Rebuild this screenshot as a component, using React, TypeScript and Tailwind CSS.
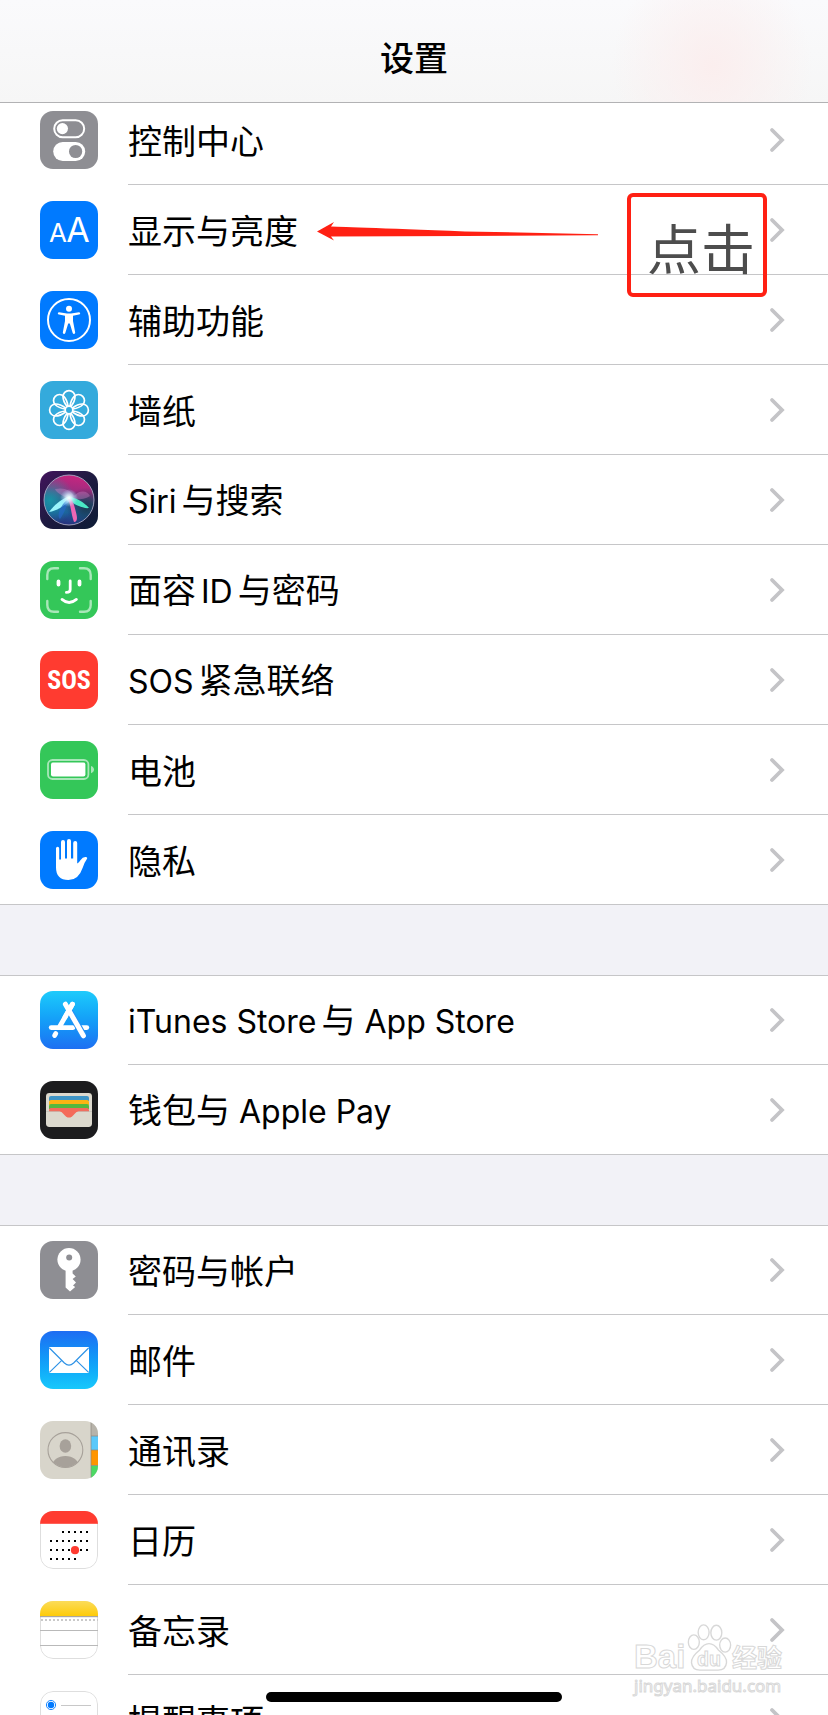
import type { ReactNode } from "react";

const TILE = "size-[58px] shrink-0 rounded-[13px]";

function Tile({ className, children }: { className: string; children: ReactNode }) {
  return (
    <svg viewBox="0 0 58 58" aria-hidden="true" className={`${TILE} ${className}`}>
      {children}
    </svg>
  );
}

function ControlCenterIcon() {
  return (
    <Tile className="bg-[#8e8e93]">
      <rect x="14.2" y="9.2" width="30" height="17" rx="8.5" fill="none" stroke="#fff" strokeWidth="2" />
      <circle cx="22.4" cy="17.6" r="5.6" fill="#fff" />
      <rect x="13.2" y="31" width="32" height="19" rx="9.5" fill="#fff" />
      <circle cx="35.6" cy="40.5" r="6.6" fill="#8e8e93" />
    </Tile>
  );
}

function DisplayIcon() {
  return (
    <Tile className="bg-[#007aff]">
      <g fill="#fff" textAnchor="middle" className="font-['Inter',sans-serif] font-normal">
        <text x="18" y="41" fontSize="26">A</text>
        <text x="38" y="41" fontSize="34">A</text>
      </g>
    </Tile>
  );
}

function AccessibilityIcon() {
  return (
    <Tile className="bg-[#007aff]">
      <circle cx="29" cy="29" r="21" fill="none" stroke="#fff" strokeWidth="2" />
      <circle cx="29" cy="17.8" r="3" fill="#fff" />
      <path
        d="M19 21.2 L27 22.4 H31 L39 21.2 Q40.4 21.4 40.2 22.6 Q40 23.4 39 23.6 L33 24.8 V30 L35.2 41.6 Q35.2 43 34 43 Q33 43 32.7 42 L29.8 32.6 H28.2 L25.3 42 Q25 43 24 43 Q22.8 43 22.8 41.6 L25 30 V24.8 L19 23.6 Q18 23.4 17.8 22.6 Q17.6 21.4 19 21.2Z"
        fill="#fff"
      />
    </Tile>
  );
}

const PETALS = [0, 45, 90, 135, 180, 225, 270, 315];

function WallpaperIcon() {
  return (
    <Tile className="bg-[#34aadc]">
      <g fill="none" stroke="#fff" strokeWidth="1.7">
        {PETALS.map((angle) => (
          <path
            key={angle}
            d="M27 25.6 C24.6 22.4 23 18.8 23 15.6 A6 6 0 0 1 35 15.6 C35 18.8 33.4 22.4 31 25.6"
            transform={`rotate(${angle} 29 29)`}
          />
        ))}
        <circle cx="29" cy="29" r="3.8" />
      </g>
    </Tile>
  );
}

function SiriIcon() {
  return (
    <Tile className="bg-linear-to-br from-[#42125c] via-[#1d1a40] to-[#0d1c36]">
      <defs>
        <linearGradient id="siriOrb" x1="0.6" y1="0" x2="0.45" y2="1">
          <stop offset="0" stopColor="#c9257f" />
          <stop offset="0.3" stopColor="#a02c80" />
          <stop offset="0.52" stopColor="#3a4f86" />
          <stop offset="0.75" stopColor="#1d5a9a" />
          <stop offset="1" stopColor="#28307c" />
        </linearGradient>
        <radialGradient id="siriTeal" cx="0.12" cy="0.5" r="0.5">
          <stop offset="0" stopColor="#1599a8" stopOpacity="0.9" />
          <stop offset="1" stopColor="#1599a8" stopOpacity="0" />
        </radialGradient>
        <radialGradient id="siriShade" cx="0.85" cy="0.65" r="0.4">
          <stop offset="0" stopColor="#17384a" stopOpacity="0.9" />
          <stop offset="1" stopColor="#17384a" stopOpacity="0" />
        </radialGradient>
        <radialGradient id="siriCore">
          <stop offset="0" stopColor="#fff" />
          <stop offset="0.35" stopColor="#dff6ff" stopOpacity="0.8" />
          <stop offset="1" stopColor="#9fdcff" stopOpacity="0" />
        </radialGradient>
      </defs>
      <circle cx="29" cy="29" r="25" fill="url(#siriOrb)" />
      <circle cx="29" cy="29" r="25" fill="url(#siriTeal)" />
      <circle cx="29" cy="29" r="25" fill="url(#siriShade)" />
      <circle cx="29" cy="29" r="25" fill="none" stroke="#a8a9c4" strokeWidth="1" strokeOpacity="0.9" />
      <path d="M29 28 C22 25 16 21 15 18 C24 16 31 19 34 25 C40 18 48 20 50 25 C44 29 36 29 29 28Z" fill="#e08ad0" fillOpacity="0.35" />
      <path d="M30 25 C23 27 15 33 9 41 C17 40 25 34 31 29Z" fill="#9af4fb" />
      <path d="M28 25 C36 27 44 31 49 37 C43 38 34 33 28 29Z" fill="#4ae8c4" />
      <path d="M28 28 C31 34 31 43 34 51 C37.4 51 37.4 47 36.4 43 C34.6 36 34 32 31 28Z" fill="#ee67b5" />
      <path d="M27 29 C21 34 16 44 20 48 C24 43 26 36 29 30Z" fill="#2667c9" fillOpacity="0.65" />
      <circle cx="29" cy="27" r="9" fill="url(#siriCore)" />
    </Tile>
  );
}

function FaceIdIcon() {
  return (
    <Tile className="bg-[#34c759]">
      <g fill="none" strokeLinecap="round" stroke="#a9e7b9" strokeWidth="2.4">
        <path d="M7.3 18 V14 Q7.3 7.3 14 7.3 H18" />
        <path d="M40 7.3 H44 Q50.7 7.3 50.7 14 V18" />
        <path d="M7.3 40 V44 Q7.3 50.7 14 50.7 H18" />
        <path d="M40 50.7 H44 Q50.7 50.7 50.7 44 V40" />
      </g>
      <g fill="none" strokeLinecap="round" stroke="#fff">
        <path d="M18.5 20.5 V23.6 M39.5 20.5 V23.6" strokeWidth="3.8" />
        <path d="M30.2 20 V28.5 Q30.2 31.4 26.4 31.4" strokeWidth="2.8" />
        <path d="M22 38.4 Q29 44.6 36.4 38.4" strokeWidth="2.8" />
      </g>
    </Tile>
  );
}

function SosIcon() {
  return (
    <Tile className="bg-[#ff3b30]">
      <text
        x="29"
        y="38"
        textAnchor="middle"
        fontSize="26"
        fill="#fff"
        className="font-['Roboto_Condensed','Liberation_Sans_Narrow','Noto_Sans',sans-serif] font-bold"
      >
        SOS
      </text>
    </Tile>
  );
}

function BatteryIcon() {
  return (
    <Tile className="bg-[#34c759]">
      <rect x="8" y="19" width="40.4" height="19" rx="4.5" fill="none" stroke="#a9e7b9" strokeWidth="1.8" />
      <rect x="11" y="21.6" width="34.4" height="13.8" rx="2" fill="#fff" />
      <path d="M51 25 Q54 26 54 28.6 Q54 31.2 51 32.2Z" fill="#a9e7b9" />
    </Tile>
  );
}

function PrivacyIcon() {
  return (
    <Tile className="bg-[#007aff]">
      <path
        d="M16 17.4 Q16 15.8 17.6 15.8 Q19.2 15.8 19.2 17.4 V28.4 H21 V11 Q21 9 23 9 Q25 9 25 11 V27.4 H27 V10 Q27 8 29 8 Q31 8 31 10 V27.4 H33.2 V12 Q33.2 10 35.2 10 Q37.2 10 37.2 12 V32.4 Q39 31.6 40.4 29.2 Q42.8 25.8 45.6 26 Q48.2 26.4 46.6 28.4 Q44.6 31 42.8 36.4 Q38.6 49 28.4 49 Q16 49 16 36.6Z"
        fill="#fff"
      />
    </Tile>
  );
}

function AppStoreIcon() {
  return (
    <Tile className="bg-linear-to-b from-[#1fcbfb] to-[#1e6ff2]">
      <g fill="none" stroke="#fff" strokeWidth="4.8" strokeLinecap="round">
        <path d="M32.4 13.2 L20 35" />
        <path d="M11.2 36.6 H33" />
        <path d="M41 36.6 H46.8" />
        <path d="M15.8 42.6 L14.6 44.6" />
      </g>
      <path d="M29.6 20.4 L43.4 44.6" stroke="#2590f6" strokeWidth="7" fill="none" />
      <path d="M32.4 13.2 L25 26.2" stroke="#fff" strokeWidth="4.8" strokeLinecap="round" />
      <path d="M25.4 13.2 L43.4 44.8" stroke="#fff" strokeWidth="5" strokeLinecap="round" />
    </Tile>
  );
}

function WalletIcon() {
  return (
    <Tile className="bg-[#1c1c1e]">
      <rect x="6" y="12" width="46" height="34" rx="3.4" fill="#dcd9ce" />
      <path d="M9 20 V17 Q9 15 11 15 H47 Q49 15 49 17 V20Z" fill="#3f95c6" />
      <path d="M9 24 V21 Q9 19 11 19 H47 Q49 19 49 21 V24Z" fill="#fcb413" />
      <path d="M9 28 V25 Q9 23 11 23 H47 Q49 23 49 25 V28Z" fill="#55b83e" />
      <path
        d="M9 30.6 V29 Q9 27 11 27 H47 Q49 27 49 29 V30.6 H38.4 Q36.4 30.8 35 32.4 Q31.6 36.6 29 36.6 Q26.4 36.6 23 32.4 Q21.6 30.8 19.6 30.6Z"
        fill="#f46b5b"
      />
      <path d="M6 30.4 H19.6 M38.4 30.4 H52" stroke="#b9b6ac" strokeWidth="0.6" />
    </Tile>
  );
}

function KeyIcon() {
  return (
    <Tile className="bg-[#8e8e93]">
      <circle cx="29" cy="18.6" r="11.6" fill="#fff" />
      <path d="M25.6 28 H32.6 V32.4 L35.8 35.6 L32.6 38 L36 41.4 L33 44.6 L35.2 46 L30 50.4 L25.6 46.4Z" fill="#fff" />
      <circle cx="29.2" cy="16.4" r="3" fill="#8e8e93" />
    </Tile>
  );
}

function MailIcon() {
  return (
    <Tile className="bg-linear-to-b from-[#1e6cf2] to-[#19c8fb]">
      <rect x="9" y="16" width="40" height="26" rx="1" fill="#fff" />
      <g fill="none" stroke="#2f93e6" strokeWidth="1.2">
        <path d="M9.4 17 L24.4 32 Q29 36.4 33.6 32 L48.6 17" />
        <path d="M9.4 41.4 L21.8 29.4 M48.6 41.4 L36.2 29.4" />
      </g>
    </Tile>
  );
}

function ContactsIcon() {
  return (
    <Tile className="bg-[#d8d5cb]">
      <rect x="51" width="7" height="15" fill="#b7b3aa" />
      <rect x="51" y="15" width="7" height="14" fill="#5ac8fa" />
      <rect x="51" y="29" width="7" height="15.4" fill="#ff9500" />
      <rect x="51" y="44.6" width="7" height="14" fill="#4cd964" />
      <path d="M51 0 V58 M51 15 H58 M51 29 H58 M51 44.5 H58" stroke="#8c887f" strokeWidth="0.7" />
      <clipPath id="contactFace">
        <circle cx="25.4" cy="29" r="17.2" />
      </clipPath>
      <circle cx="25.4" cy="29" r="17.4" fill="none" stroke="#a7a19a" strokeWidth="1.1" />
      <ellipse cx="25.4" cy="25" rx="5.8" ry="6.7" fill="#a7a19a" />
      <ellipse cx="25.4" cy="45.6" rx="13.6" ry="10.6" fill="#a7a19a" clipPath="url(#contactFace)" />
    </Tile>
  );
}

const CALENDAR_DOTS: [number, number[]][] = [
  [21, [23, 29, 35, 41, 47]],
  [30, [11, 17, 23, 29, 35, 41, 47]],
  [39, [11, 17, 23, 29, 41, 47]],
  [48, [11, 17, 23, 29, 35]],
];

function CalendarIcon() {
  return (
    <Tile className="bg-white">
      <rect x="0.5" y="0.5" width="57" height="57" rx="12.5" fill="#fff" stroke="#dedede" />
      <rect width="58" height="12.8" fill="#ff3b30" />
      {CALENDAR_DOTS.map(([y, xs]) =>
        xs.map((x) => <rect key={`${x}-${y}`} x={x - 1} y={y - 1} width="2" height="2" fill="#000" />),
      )}
      <circle cx="35" cy="39.2" r="4.1" fill="#ff3b30" />
    </Tile>
  );
}

function NotesIcon() {
  return (
    <Tile className="bg-white">
      <defs>
        <linearGradient id="notesTop" x1="0" y1="0" x2="0" y2="1">
          <stop offset="0" stopColor="#fbdc5a" />
          <stop offset="1" stopColor="#fecb08" />
        </linearGradient>
      </defs>
      <rect x="0.5" y="0.5" width="57" height="57" rx="12.5" fill="#fff" stroke="#dedede" />
      <rect width="58" height="15" fill="url(#notesTop)" />
      <rect y="15" width="58" height="1.2" fill="#a9a79f" />
      <path d="M1 19 H58" stroke="#c9c9c9" strokeWidth="1.8" strokeDasharray="2 2" />
      <path d="M0 29.5 H58 M0 44.5 H58" stroke="#b9b9b9" />
    </Tile>
  );
}

function RemindersIcon() {
  return (
    <Tile className="bg-white">
      <rect x="0.5" y="0.5" width="57" height="57" rx="12.5" fill="#fff" stroke="#dedede" />
      <circle cx="11" cy="14" r="4.6" fill="none" stroke="#007aff" strokeWidth="0.9" />
      <circle cx="11" cy="14" r="3.2" fill="#007aff" />
      <circle cx="11" cy="29" r="4.6" fill="none" stroke="#ff3b30" />
      <circle cx="11" cy="44" r="4.6" fill="none" stroke="#ff9500" />
      <path d="M21 14.5 H51 M21 29.5 H51 M21 44.5 H51" stroke="#c8c8c8" />
    </Tile>
  );
}

function Chevron() {
  return (
    <svg viewBox="0 0 16 26" aria-hidden="true" className="h-[26px] w-4 shrink-0">
      <path d="M3 3 L13 13 L3 23" fill="none" stroke="#c4c4c7" strokeWidth="3.8" strokeLinecap="round" strokeLinejoin="miter" />
    </svg>
  );
}

function TapHint() {
  return (
    <>
      <svg viewBox="0 0 284 20" aria-hidden="true" className="absolute top-[36px] right-[229px] h-5 w-[284px]">
        <path d="M2 10.4 L19 1 L16 5.6 Q21 5.8 150 10.4 L283 13.2 V14.2 L150 15 L16 15.6 L19 19.4Z" fill="#ff2013" />
      </svg>
      <span className="absolute top-2 right-[61px] z-10 flex h-[104px] w-[140px] items-center justify-center rounded-md border-4 border-[#ff2013] pt-3 pl-2 text-[54px] leading-[60px] text-[#4d4d4d]">
        点击
      </span>
    </>
  );
}

type Item = { label: string; icon: ReactNode; hint?: boolean };

const SECTIONS: Item[][] = [
  [
    { label: "控制中心", icon: <ControlCenterIcon /> },
    { label: "显示与亮度", icon: <DisplayIcon />, hint: true },
    { label: "辅助功能", icon: <AccessibilityIcon /> },
    { label: "墙纸", icon: <WallpaperIcon /> },
    { label: "Siri与搜索", icon: <SiriIcon /> },
    { label: "面容ID与密码", icon: <FaceIdIcon /> },
    { label: "SOS紧急联络", icon: <SosIcon /> },
    { label: "电池", icon: <BatteryIcon /> },
    { label: "隐私", icon: <PrivacyIcon /> },
  ],
  [
    { label: "iTunes Store与 App Store", icon: <AppStoreIcon /> },
    { label: "钱包与 Apple Pay", icon: <WalletIcon /> },
  ],
  [
    { label: "密码与帐户", icon: <KeyIcon /> },
    { label: "邮件", icon: <MailIcon /> },
    { label: "通讯录", icon: <ContactsIcon /> },
    { label: "日历", icon: <CalendarIcon /> },
    { label: "备忘录", icon: <NotesIcon /> },
    { label: "提醒事项", icon: <RemindersIcon /> },
  ],
];

/* Latin runs are set a little smaller than the Chinese text, with a gap where the scripts touch. */
function Label({ text }: { text: string }) {
  const runs = text.split(/([A-Za-z ]+)/).filter(Boolean);
  return (
    <span className="pt-1 text-[34px] leading-[48px] whitespace-pre">
      {runs.map((run, i) => {
        if (!/[A-Za-z]/.test(run)) return run;
        const before = i > 0 && !run.startsWith(" ") ? "ml-[5px]" : "";
        const after = i < runs.length - 1 ? "mr-[5px]" : "";
        return (
          <span key={i} className={`text-[32px] ${before} ${after}`}>
            {run}
          </span>
        );
      })}
    </span>
  );
}

function Row({ item, last }: { item: Item; last: boolean }) {
  return (
    <li className="relative">
      <a href="#" className={`flex h-[90px] pl-10 ${last ? "border-b border-[#c6c6c8]" : ""}`}>
        <span className="flex items-center">{item.icon}</span>
        <span
          className={`ml-[30px] flex flex-1 items-center justify-between pr-[43px] ${last ? "" : "border-b border-[#c6c6c8]"}`}
        >
          <Label text={item.label} />
          <Chevron />
        </span>
      </a>
      {item.hint && <TapHint />}
    </li>
  );
}

function Watermark() {
  return (
    <div
      aria-hidden="true"
      className="absolute right-[46px] bottom-4 flex w-[148px] flex-col font-['Noto_Sans','Noto_Sans_CJK_SC',sans-serif] whitespace-nowrap text-white [-webkit-text-stroke:1px_#d8d8d8]"
    >
      <div className="flex items-end justify-between">
        <span className="font-['Liberation_Sans',sans-serif] text-[33px] leading-[32px] font-bold">Bai</span>
        <svg viewBox="0 0 47 50" className="h-[50px] w-[46px] shrink-0">
          <g fill="#fff" stroke="#d8d8d8" strokeWidth="1.4">
            <ellipse cx="8" cy="19" rx="5.6" ry="7.4" />
            <ellipse cx="18" cy="9" rx="5.6" ry="7.6" />
            <ellipse cx="31" cy="9.4" rx="5.6" ry="7.6" />
            <ellipse cx="40" cy="22" rx="5.6" ry="7.2" />
            <path d="M23.5 20.5 Q29 20.5 33 27 Q42 34 41.4 40 Q40.6 48 32 47.6 H15 Q6.4 48 5.6 40 Q5.2 34 14 27 Q18 20.5 23.5 20.5Z" />
          </g>
          <text x="23.5" y="43" textAnchor="middle" fontSize="20" fill="#fff" stroke="#d8d8d8" className="font-['Liberation_Sans',sans-serif] font-bold">
            du
          </text>
        </svg>
        <span className="text-[25px] leading-[32px] font-bold">经验</span>
      </div>
      <span className="text-[17px] leading-[26px]">jingyan.baidu.com</span>
    </div>
  );
}

export default function App() {
  return (
    <div className="relative flex h-screen flex-col overflow-hidden bg-[#f2f2f7] font-['Inter','Noto_Sans_CJK_SC',sans-serif] text-black">
      <header className="relative z-20 flex h-[103px] shrink-0 items-end justify-center border-b border-[#b2b2b4] bg-[#f8f8f9] bg-[radial-gradient(ellipse_100px_110px_at_86%_65%,#fbeeee,transparent),linear-gradient(#fafafc,#f6f6f6)] pb-[19px]">
        <h1 className="text-[34px] leading-[48px] font-medium">设置</h1>
      </header>
      <main className="-mt-2 flex min-h-0 flex-1 flex-col gap-[70px] overflow-y-auto [scrollbar-width:none]">
        {SECTIONS.map((items, s) => (
          <ul key={items[0].label} className={`relative shrink-0 bg-white ${s > 0 ? "shadow-[inset_0_1px_0_#c6c6c8]" : ""}`}>
            {items.map((item, i) => (
              <Row key={item.label} item={item} last={i === items.length - 1} />
            ))}
          </ul>
        ))}
      </main>
      <Watermark />
      <div className="absolute bottom-[13px] left-1/2 z-20 h-[10px] w-[296px] -translate-x-1/2 rounded-full bg-black" />
    </div>
  );
}
